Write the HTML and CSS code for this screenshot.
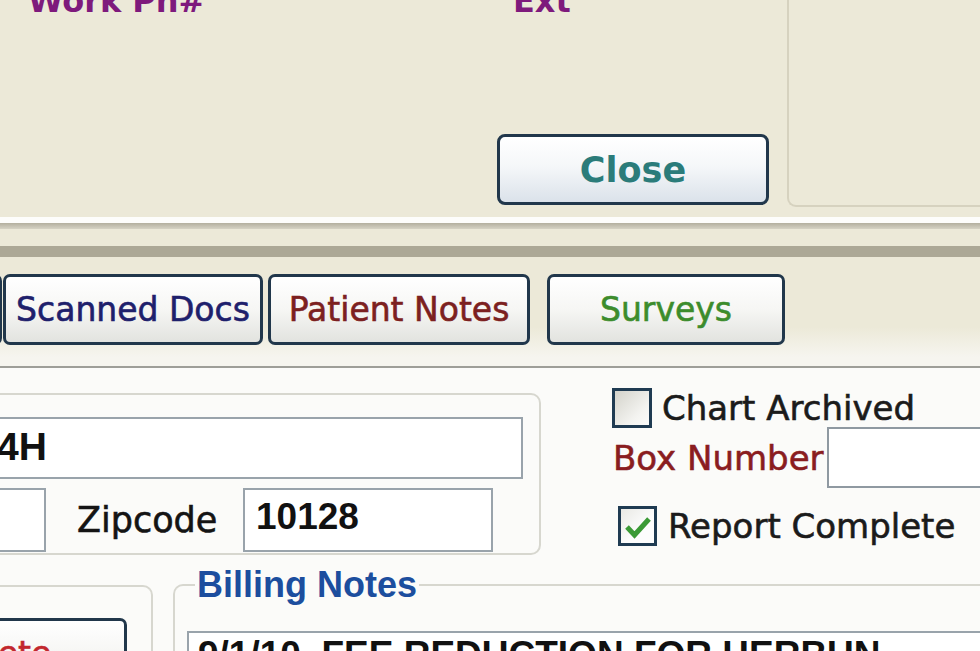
FILE: index.html
```html
<!DOCTYPE html>
<html>
<head>
<meta charset="utf-8">
<link rel="stylesheet" href="styles.css">
</head>
<body>
<div class="top">
  <div class="top-main">
    <div class="phone-labels">
      <span class="lbl-work">Work Ph#</span>
      <span class="lbl-ext">Ext</span>
    </div>
    <div class="close-row">
      <button class="btn btn-close">Close</button>
    </div>
  </div>
  <div class="top-side"></div>
</div>
<div class="sep-white"></div>
<div class="sep-line"></div>
<div class="sep-gap"></div>
<div class="sep-band"></div>
<div class="tabs">
  <button class="btn tab tab-partial"></button>
  <button class="btn tab tab-scanned">Scanned Docs</button>
  <button class="btn tab tab-notes">Patient Notes</button>
  <button class="btn tab tab-surveys">Surveys</button>
</div>
<div class="content">
  <div class="row1">
    <div class="group1">
      <div class="field addr">4H</div>
      <div class="row-zip">
        <div class="field small-box"></div>
        <span class="zip-label">Zipcode</span>
        <div class="field zip-input">10128</div>
      </div>
    </div>
    <div class="side">
      <div class="check-row">
        <span class="cb cb-empty"></span>
        <span class="cb-label">Chart Archived</span>
      </div>
      <div class="box-row">
        <span class="box-label">Box Number</span>
        <div class="field box-input"></div>
      </div>
      <div class="check-row report-row">
        <span class="cb cb-checked">
          <svg viewBox="0 0 33 34" width="33" height="34"><path d="M6 18 L13.5 26 L28 10" stroke="#3b9a36" stroke-width="5" fill="none" stroke-linejoin="miter"/></svg>
        </span>
        <span class="cb-label">Report Complete</span>
      </div>
    </div>
  </div>
  <div class="row2">
    <div class="left-box">
      <button class="btn btn-delete">Delete</button>
    </div>
    <fieldset class="billing">
      <legend>Billing Notes</legend>
      <div class="field billing-text">9/1/10&nbsp; FEE REDUCTION FOR HERBUN</div>
    </fieldset>
  </div>
</div>
</body>
</html>
```
FILE: styles.css
```css
html, body {
  margin: 0;
  padding: 0;
}
body {
  width: 980px;
  height: 651px;
  overflow: hidden;
  font-family: "DejaVu Sans", "Verdana", sans-serif;
  background: #fbfbf9;
}

/* ---------- top panel ---------- */
.top {
  display: flex;
  height: 217px;
  background: #ece9d8;
}
.top-main {
  width: 787px;
  display: flex;
  flex-direction: column;
}
.phone-labels {
  display: flex;
  margin-top: -18px;
  height: 38px;
  line-height: 38px;
  font-weight: bold;
  font-size: 32px;
  color: #7e1a7c;
}
.lbl-work {
  margin-left: 28px;
  width: 485px;
}
.close-row {
  margin-top: auto;
  display: flex;
  justify-content: flex-end;
  padding: 0 18px 12px 0;
}
.top-side {
  flex: 1;
  align-self: flex-start;
  height: 207px;
  box-sizing: border-box;
  border-left: 2px solid #d6d2bf;
  border-bottom: 2px solid #d6d2bf;
  border-bottom-left-radius: 9px;
}

/* ---------- buttons ---------- */
.btn {
  box-sizing: border-box;
  height: 71px;
  padding: 0;
  border: 3px solid #21374b;
  border-radius: 7px;
  background: linear-gradient(#ffffff 0%, #f6f6f4 50%, #e2e3df 100%);
  font-family: "DejaVu Sans", sans-serif;
  font-size: 33px;
  white-space: nowrap;
  flex: none;
  -webkit-text-stroke: 0.6px currentColor;
}
.btn-close {
  width: 272px;
  border-radius: 8px;
  background: linear-gradient(#ffffff 0%, #f5f7f9 45%, #dbe2ea 100%);
  font-weight: bold;
  font-size: 35px;
  color: #2b7c7a;
  -webkit-text-stroke: 0;
}

/* ---------- separators ---------- */
.sep-white { height: 6px; background: #fdfdfb; }
.sep-line { height: 6px; background: linear-gradient(#b3af9e, #d6d3c4); }
.sep-gap { height: 17px; background: #ece9d8; }
.sep-band { height: 11px; background: #aca896; }

/* ---------- tabs ---------- */
.tabs {
  box-sizing: border-box;
  height: 111px;
  padding-top: 17px;
  display: flex;
  align-items: flex-start;
  background: linear-gradient(#ece9d8 0, #ece9d8 70px, #f6f5ef 100px);
  border-bottom: 2px solid #9e9e98;
}
.tab-partial { width: 40px; margin-left: -38px; }
.tab-scanned { width: 260px; margin-left: 1px; color: #1e206c; }
.tab-notes { width: 262px; margin-left: 5px; color: #7c2020; }
.tab-surveys { width: 238px; margin-left: 17px; color: #3c8c2c; }

/* ---------- content ---------- */
.content {
  display: flex;
  flex-direction: column;
}
.field {
  box-sizing: border-box;
  border: 2px solid #99a3ab;
  background: #ffffff;
  font-family: "Liberation Sans", "Arial", sans-serif;
  font-weight: bold;
  color: #111111;
  white-space: nowrap;
}
.row1 {
  display: flex;
  align-items: flex-start;
}
.group1 {
  box-sizing: border-box;
  margin: 25px 0 0 -12px;
  width: 553px;
  height: 162px;
  border: 2px solid #d7d7cf;
  border-radius: 10px;
  padding: 22px 16px 0 0;
  flex: none;
}
.addr {
  height: 62px;
  margin-left: -20px;
  padding-left: 25px;
  font-size: 39px;
  line-height: 56px;
}
.row-zip {
  display: flex;
  align-items: center;
  margin-top: 9px;
  height: 64px;
}
.small-box {
  width: 76px;
  height: 64px;
  margin-left: -20px;
  flex: none;
}
.zip-label {
  margin-left: 31px;
  width: 166px;
  font-size: 35px;
  color: #141414;
  flex: none;
  -webkit-text-stroke: 0.6px currentColor;
}
.zip-input {
  width: 250px;
  height: 64px;
  padding-left: 11px;
  font-size: 37px;
  line-height: 54px;
  flex: none;
}

/* right side checks */
.side {
  margin-left: 71px;
  padding-top: 20px;
  flex: none;
}
.check-row {
  display: flex;
  align-items: center;
  height: 40px;
}
.cb {
  box-sizing: border-box;
  width: 40px;
  height: 40px;
  border: 3px solid #1f3b52;
  flex: none;
  display: flex;
}
.cb-empty {
  background: linear-gradient(135deg, #d4d3cb 0%, #f4f4f1 70%, #fbfbfa 100%);
}
.cb-checked {
  width: 39px;
  background: linear-gradient(135deg, #e9e9e4 0%, #fdfdfd 60%);
}
.cb-label {
  margin-left: 10px;
  font-size: 34px;
  color: #1b1b1b;
  white-space: nowrap;
  -webkit-text-stroke: 0.6px currentColor;
}
.box-row {
  display: flex;
  align-items: center;
  margin-top: -1px;
  height: 61px;
}
.box-label {
  margin-left: 1px;
  width: 214px;
  font-size: 34px;
  color: #8a1d1f;
  flex: none;
  -webkit-text-stroke: 0.6px currentColor;
}
.box-input {
  width: 200px;
  height: 61px;
  border-color: #8f99a1;
  flex: none;
}
.report-row {
  margin-top: 18px;
  margin-left: 6px;
}
.report-row .cb-label {
  margin-left: 11px;
}

/* bottom row */
.row2 {
  display: flex;
  align-items: flex-start;
  margin-top: 10px;
}
.left-box {
  box-sizing: border-box;
  width: 173px;
  height: 100px;
  margin: 20px 0 0 -20px;
  padding: 31px 24px 0 0;
  border: 2px solid #d7d7cf;
  border-bottom: none;
  border-top-right-radius: 10px;
  display: flex;
  justify-content: flex-end;
  flex: none;
}
.btn-delete {
  width: 260px;
  color: #c2272d;
}
.billing {
  flex: 1;
  min-width: 0;
  margin: 0 0 0 20px;
  padding: 0 0 0 12px;
  border: 2px solid #d7d7cf;
  border-right: none;
  border-bottom: none;
  border-top-left-radius: 10px;
  height: 100px;
  box-sizing: border-box;
}
.billing legend {
  margin-left: 8px;
  padding: 0 2px;
  font-family: "Liberation Sans", "Arial", sans-serif;
  font-weight: bold;
  font-size: 36px;
  line-height: 40px;
  color: #1c4e9e;
}
.billing-text {
  width: 900px;
  height: 60px;
  margin-top: 26px;
  padding: 1px 9px;
  font-size: 37px;
  line-height: 42px;
}
```
